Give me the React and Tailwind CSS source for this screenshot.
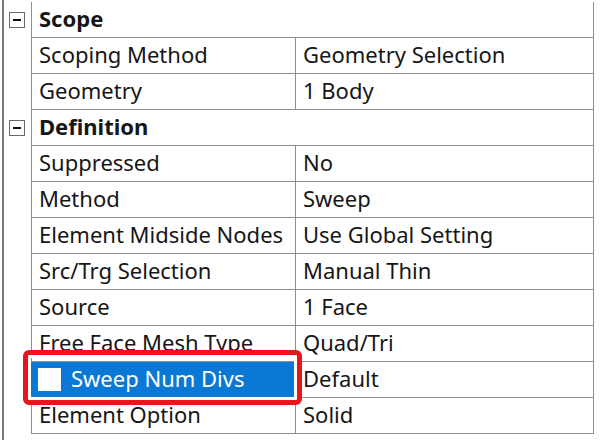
import React from "react";

const rows = [
  { type: "header", label: "Scope" },
  { label: "Scoping Method", value: "Geometry Selection" },
  { label: "Geometry", value: "1 Body" },
  { type: "header", label: "Definition" },
  { label: "Suppressed", value: "No" },
  { label: "Method", value: "Sweep" },
  { label: "Element Midside Nodes", value: "Use Global Setting" },
  { label: "Src/Trg Selection", value: "Manual Thin" },
  { label: "Source", value: "1 Face" },
  { label: "Free Face Mesh Type", value: "Quad/Tri" },
  { label: "Sweep Num Divs", value: "Default", selected: true },
  { label: "Element Option", value: "Solid" },
];

function MinusBox() {
  return (
    <div className="ml-[5px] w-[16px] h-[16px] border border-[#6a6a6a] bg-white flex items-center justify-center">
      <div className="w-[8px] h-[2px] bg-[#111]" />
    </div>
  );
}

export default function App() {
  return (
    <div
      className="relative w-[600px] h-[440px] bg-white overflow-hidden text-[#161616]"
      style={{ fontFamily: "'Noto Sans', 'Open Sans', sans-serif" }}
    >
      <div className="ml-[2px] h-full border-l-2 border-[#7a7a7a] pt-[2px]">
        {rows.map((r, i) =>
          r.type === "header" ? (
            <div key={i} className="flex h-[36px] w-[590px]">
              <div className="w-[27px] shrink-0 flex items-center">
                <MinusBox />
              </div>
              <div className="w-[563px] border-l border-r border-b border-[#8f8f8f] flex items-center pl-[7px] pb-[4px] text-[22px] font-bold leading-none">
                {r.label}
              </div>
            </div>
          ) : (
            <div key={i} className="flex h-[36px] w-[590px]">
              <div className="w-[27px] shrink-0" />
              {r.selected ? (
                <div className="w-[265px] bg-[#0a78d4] border-l border-r border-b border-[#0a78d4] flex items-center pl-[6px] text-[22px] leading-none text-white whitespace-nowrap">
                  <div className="w-[23px] h-[23px] bg-white mr-[10px] shrink-0" />
                  <span className="pb-[4px]">{r.label}</span>
                </div>
              ) : (
                <div className="w-[265px] border-l border-r border-b border-[#8f8f8f] flex items-center pl-[7px] pb-[4px] text-[22px] leading-none whitespace-nowrap">
                  {r.label}
                </div>
              )}
              <div className="w-[298px] border-r border-b border-[#8f8f8f] flex items-center pl-[7px] pb-[4px] text-[22px] leading-none">
                {r.value}
              </div>
            </div>
          )
        )}
      </div>
      <div className="absolute left-[23px] top-[350px] w-[279px] h-[55px] border-[5px] border-[#e8161c] rounded-[6px] shadow-[inset_0_0_0_3px_white]" />
    </div>
  );
}
